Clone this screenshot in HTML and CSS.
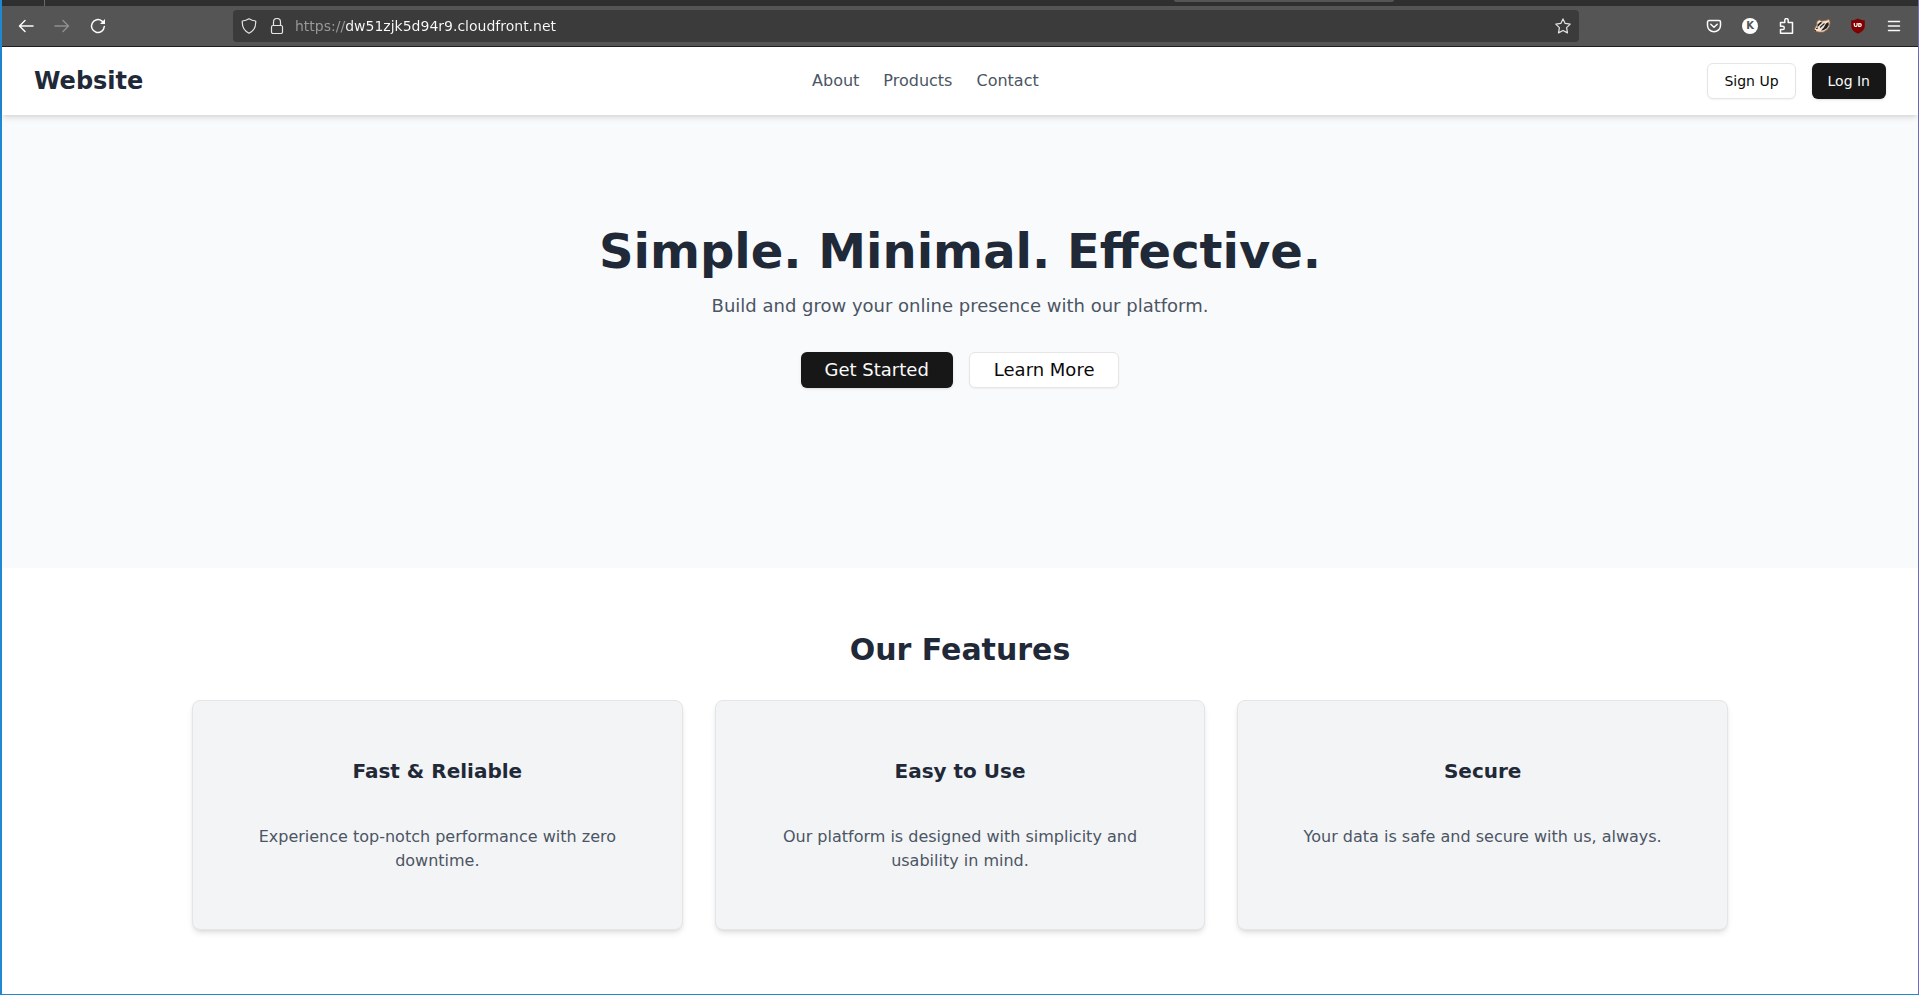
FILE: index.html
```html
<!DOCTYPE html>
<html lang="en">
<head>
<meta charset="utf-8">
<meta name="viewport" content="width=device-width, initial-scale=1">
<title>Website</title>
<link rel="stylesheet" href="styles.css">
</head>
<body>
<div class="window">
  <div class="tab-strip"><span class="tab-divider"></span><span class="tab-edge"></span></div>
  <div class="toolbar">
    <div class="tool-group">
      <button class="tool" type="button" aria-label="Back">
        <svg width="16" height="16" viewBox="0 0 16 16" class="stroke"><path d="M15 8H2M7 2.5 1.5 8 7 13.5"/></svg>
      </button>
      <button class="tool tool-off" type="button" aria-label="Forward" disabled>
        <svg width="16" height="16" viewBox="0 0 16 16" class="stroke"><path d="M1 8h13M9 2.500 14.500 8 9 13.500"/></svg>
      </button>
      <button class="tool" type="button" aria-label="Reload">
        <svg width="16" height="16" viewBox="0 0 16 16" class="stroke"><path d="M14.300 8.500A6.400 6.400 0 1 1 12 3.100L13.500 4.500"/><path d="M15 1v5h-5z" fill="currentColor" stroke="none"/></svg>
      </button>
    </div>
    <div class="url-bar">
      <svg width="16" height="16" viewBox="0 0 16 16" class="stroke thin"><path d="M8 .8c2 1.300 4.200 2 6.700 2.200.4 5.600-1.300 9.700-6.700 12.200C2.600 12.700.9 8.600 1.300 3 3.800 2.800 6 2.100 8 .8z"/></svg>
      <svg width="16" height="16" viewBox="0 0 16 16" class="stroke thin"><rect x="2.500" y="7.500" width="11" height="8" rx="1.500"/><path d="M4.500 7.500V4a3.500 3.500 0 0 1 7 0v3.500"/></svg>
      <input class="url" type="text" aria-label="Address" value="https://dw51zjk5d94r9.cloudfront.net" spellcheck="false">
      <button class="bookmark" type="button" aria-label="Bookmark this page">
        <svg width="16" height="16" viewBox="0 0 16 16" class="stroke thin"><path d="M8 .9 10.200 5.400 15.200 6.100 11.600 9.600 12.500 14.900 8 12.500 3.500 14.900 4.400 9.600.8 6.100 5.800 5.400z"/></svg>
      </button>
    </div>
    <div class="tool-group">
      <button class="tool" type="button" aria-label="Save to Pocket">
        <svg width="16" height="16" viewBox="0 0 16 16" class="stroke"><path d="M3 2.500h10a1.500 1.500 0 0 1 1.500 1.500v3.500a6.500 6.200 0 0 1-13 0V4A1.500 1.500 0 0 1 3 2.500z"/><path d="M4.800 6.300 8 9.300l3.200-3"/></svg>
      </button>
      <button class="tool" type="button" aria-label="K extension"><span class="k-badge">K</span></button>
      <button class="tool" type="button" aria-label="Extensions">
        <svg width="16" height="16" viewBox="0 0 16 16" class="stroke"><path d="M2.500 4.500h4.300V2.300a1.700 1.700 0 0 1 3.400 0v2.200h4.300v10.700h-12v-3.700h2.200a1.500 1.500 0 0 0 0-3.200H2.500z"/></svg>
      </button>
      <button class="tool" type="button" aria-label="Privacy Badger">
        <svg width="18" height="16" viewBox="0 0 18 16"><path d="M4 3.500 6.500 2l2 1.200 4.500-.7L16 1.500l1 3-.8 4-2 3-4 2.500H6L1 13l1-3 1.800-3z" fill="#f1e3d3" stroke="#b5713d" stroke-width=".8"/><path d="M4.500 6.500 7.500 4l2 .4-2.600 2.300-2.500 2.500zM13 5.500l2.500-1.500.3 3-2 3.300-3.300 2-2.500.2 2.800-3z" fill="#222"/><path d="m7 9.500 4.500-4M1.300 12l1.700 1.300M3 10.500l2-.5" stroke="#222" stroke-width="1.100"/></svg>
      </button>
      <button class="tool" type="button" aria-label="uBlock Origin">
        <svg width="16" height="16" viewBox="0 0 16 16"><path d="M8 .5c2 1.300 4.200 1.700 6.800 1.800v5.200c0 4-2.500 6.300-6.800 8.200-4.300-1.900-6.800-4.200-6.800-8.200V2.300C3.800 2.200 6 1.800 8 .5z" fill="#800000"/><path d="M4.300 5v2.100a1.400 1.400 0 0 0 2.800 0V5M8.800 5.600h1a1.400 1.400 0 0 1 0 2.900h-1z" fill="none" stroke="#fff" stroke-width="1.200"/></svg>
      </button>
      <button class="tool" type="button" aria-label="Menu">
        <svg width="16" height="16" viewBox="0 0 16 16" class="stroke"><path d="M2.500 3.500h11M2.500 8h11M2.500 12.500h11"/></svg>
      </button>
    </div>
  </div>

  <header class="site-header">
    <div class="brand">Website</div>
    <nav class="nav">
      <a href="#about">About</a>
      <a href="#products">Products</a>
      <a href="#contact">Contact</a>
    </nav>
    <div class="actions">
      <button class="btn btn-light" type="button">Sign Up</button>
      <button class="btn btn-dark" type="button">Log In</button>
    </div>
  </header>

  <main>
    <section class="hero">
      <h1>Simple. Minimal. Effective.</h1>
      <p>Build and grow your online presence with our platform.</p>
      <div class="actions">
        <button class="btn btn-large btn-dark" type="button">Get Started</button>
        <button class="btn btn-large btn-light" type="button">Learn More</button>
      </div>
    </section>
    <section class="features">
      <h2>Our Features</h2>
      <div class="cards">
        <article class="card">
          <h3>Fast &amp; Reliable</h3>
          <p>Experience top-notch performance with zero downtime.</p>
        </article>
        <article class="card">
          <h3>Easy to Use</h3>
          <p>Our platform is designed with simplicity and usability in mind.</p>
        </article>
        <article class="card">
          <h3>Secure</h3>
          <p>Your data is safe and secure with us, always.</p>
        </article>
      </div>
    </section>
  </main>
</div>
</body>
</html>
```
FILE: styles.css
```css
*, *::before, *::after { box-sizing: border-box; }

body, h1, h2, h3, p { margin: 0; }

body {
  background: #fff;
  color: #1f2937;
  font: 16px/24px "DejaVu Sans", sans-serif;
}

button, input {
  margin: 0;
  padding: 0;
  border: 0;
  background: none;
  color: inherit;
  font: inherit;
}

svg { display: block; flex: none; }

.window {
  min-height: 100vh;
  border: solid #1e88d2;
  border-width: 0 1px 1px 2px;
  border-right-color: #6c6cc4;
}

/* Browser chrome */
.tab-strip {
  display: flex;
  justify-content: space-between;
  height: 6px;
  padding: 0 524px 0 42px;
  background: #2f2f2f;
}
.tab-divider { width: 1px; background: #6a6a6a; }
.tab-edge {
  width: 220px;
  height: 2px;
  border-radius: 0 0 4px 4px;
  background: #555;
}

.toolbar {
  display: flex;
  align-items: center;
  height: 41px;
  padding: 0 6px;
  border-bottom: 1px solid #1f1f1f;
  background: #555;
  color: #fbfbfe;
}
.tool-group { display: flex; }
.tool {
  display: flex;
  align-items: center;
  justify-content: center;
  width: 36px;
  height: 32px;
}
.tool-off { color: #8f8f8f; }
.stroke {
  fill: none;
  stroke: currentColor;
  stroke-width: 1.5;
  stroke-linecap: round;
  stroke-linejoin: round;
}
.thin { stroke-width: 1.2; color: #e4e4e4; }

.url-bar {
  display: flex;
  flex: 1;
  align-items: center;
  gap: 12px;
  min-width: 0;
  height: 32px;
  margin: 0 117px;
  padding: 0 8px;
  border-radius: 4px;
  background: #3b3b3b;
}
.url {
  flex: 1;
  min-width: 0;
  margin-left: -2px;
  background: linear-gradient(to right, #9a9a9a 50px, #fbfbfe 50px);
  background-clip: text;
  -webkit-background-clip: text;
  color: transparent;
  font-size: 14px;
  line-height: 24px;
}
.k-badge {
  width: 16px;
  height: 16px;
  border-radius: 50%;
  background: #fff;
  color: #555;
  font-size: 10px;
  font-weight: 700;
  line-height: 16px;
  text-align: center;
}

/* Site header */
.site-header {
  position: relative;
  display: flex;
  align-items: center;
  justify-content: space-between;
  padding: 16px 32px;
  background: #fff;
  box-shadow: 0 4px 6px -1px rgba(0, 0, 0, .1), 0 2px 4px -2px rgba(0, 0, 0, .1);
}
.brand { font-size: 24px; font-weight: 700; line-height: 32px; }
.nav { display: flex; gap: 24px; }
.nav a { color: #4b5563; text-decoration: none; }
.actions { display: flex; gap: 16px; }

.btn {
  height: 36px;
  padding: 0 16px;
  border-radius: 6px;
  font-size: 14px;
  line-height: 20px;
}
.btn-dark {
  background: #171717;
  color: #fafafa;
  box-shadow: 0 1px 3px rgba(0, 0, 0, .1), 0 1px 2px -1px rgba(0, 0, 0, .1);
}
.btn-light {
  border: 1px solid #e5e5e5;
  background: #fff;
  color: #0a0a0a;
  box-shadow: 0 1px 2px rgba(0, 0, 0, .05);
}
.btn-large { padding: 0 24px; font-size: 18px; line-height: 28px; }

/* Hero */
.hero {
  display: flex;
  flex-direction: column;
  align-items: center;
  padding: 112px 32px 180px;
  background: #f9fafc;
  text-align: center;
}
.hero h1 { margin-bottom: 17px; font-size: 48px; line-height: 48px; }
.hero p {
  margin-bottom: 32px;
  color: #4b5563;
  font-size: 18px;
  line-height: 28px;
}

/* Features */
.features { padding: 64px 32px; }
.features h2 {
  margin-bottom: 32px;
  font-size: 30px;
  line-height: 36px;
  text-align: center;
}
.cards {
  display: grid;
  grid-template-columns: repeat(3, 1fr);
  gap: 32px;
  max-width: 1536px;
  margin: 0 auto;
}
.card {
  padding: 56px 48px;
  border: 1px solid #e5e5e5;
  border-radius: 8px;
  background: #f3f4f6;
  box-shadow: 0 4px 6px -1px rgba(0, 0, 0, .1), 0 2px 4px -2px rgba(0, 0, 0, .1);
  text-align: center;
}
.card h3 { margin-bottom: 40px; font-size: 20px; line-height: 28px; }
.card p { color: #4b5563; }
```
